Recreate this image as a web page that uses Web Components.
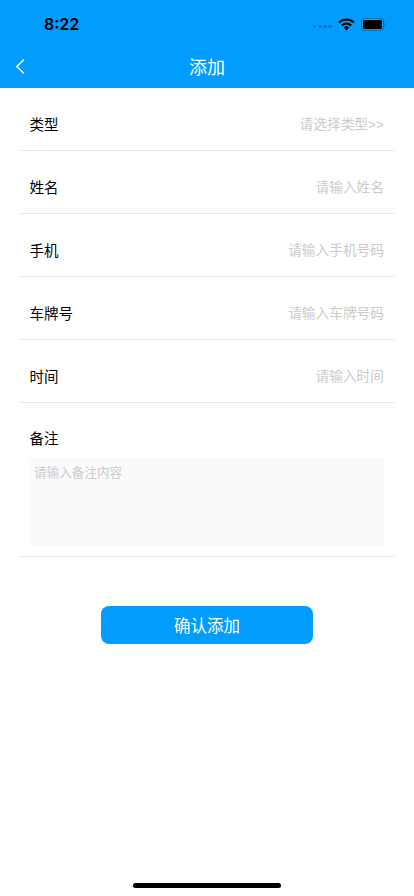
<!DOCTYPE html>
<html lang="zh">
<head>
<meta charset="utf-8">
<title>添加</title>
<style>
  html, body { margin: 0; height: 100%; background: #fff; }
  body { font-family: "Noto Sans CJK SC", "Liberation Sans", sans-serif; }
</style>
</head>
<body>
<add-page>
  <nav-header>添加</nav-header>
  <form-row label="类型" hint="请选择类型&gt;&gt;"></form-row>
  <form-row label="姓名" hint="请输入姓名"></form-row>
  <form-row label="手机" hint="请输入手机号码"></form-row>
  <form-row label="车牌号" hint="请输入车牌号码"></form-row>
  <form-row label="时间" hint="请输入时间"></form-row>
  <note-row label="备注" hint="请输入备注内容"></note-row>
  <submit-button>确认添加</submit-button>
  <home-bar></home-bar>
</add-page>

<script>
  customElements.define('add-page', class extends HTMLElement {
    constructor() {
      super();
      this.attachShadow({mode: 'open'}).innerHTML = `
        <style>
          :host { display: flex; flex-direction: column; height: 896px; overflow: hidden; background: #fff; }
        </style>
        <slot></slot>`;
    }
  });

  customElements.define('nav-header', class extends HTMLElement {
    constructor() {
      super();
      this.attachShadow({mode: 'open'}).innerHTML = `
        <style>
          :host { display: block; height: 88px; background: #009dff; flex: none; }
          .status { height: 44px; display: flex; align-items: center; padding: 4px 28px 0 44px; box-sizing: border-box; }
          .time { font: 600 16px/20px Inter, "Liberation Sans", sans-serif; color: #000; flex: 1; }
          .icons { display: flex; align-items: center; }
          .dots { display: flex; gap: 1.4px; margin-right: 6px; margin-top: 5px; }
          .dots i { width: 3.8px; height: 3.8px; border-radius: 50%; background: #0a78bd; }
          .wifi { margin-right: 5px; }
          .bar { height: 44px; display: flex; align-items: center; justify-content: center; position: relative; }
          .back { position: absolute; left: 14px; top: 13px; }
          .title { font-size: 18px; line-height: 24px; color: #fff; }
        </style>
        <div class="status">
          <span class="time">8:22</span>
          <span class="icons">
            <span class="dots"><i></i><i></i><i></i><i></i></span>
            <svg class="wifi" width="17" height="13" viewBox="0 0 17 13">
              <path d="M1 4.6 A10.8 10.8 0 0 1 16 4.6" fill="none" stroke="#000" stroke-width="2"/>
              <path d="M3.8 7.4 A6.9 6.9 0 0 1 13.2 7.4" fill="none" stroke="#000" stroke-width="2"/>
              <path d="M5.8 9.4 A3.9 3.9 0 0 1 11.2 9.4 L8.5 12.4 Z" fill="#000"/>
            </svg>
            <svg width="26" height="13" viewBox="0 0 26 13">
              <rect x="1.5" y="0.5" width="22" height="12" rx="3.2" fill="none" stroke="#0576bd" stroke-width="1.2"/>
              <rect x="3" y="2" width="19" height="9" rx="1.8" fill="#000"/>
              <path d="M24.6 4.8 a1.8 1.8 0 0 1 0 3.4 Z" fill="#0576bd"/>
            </svg>
          </span>
        </div>
        <div class="bar">
          <svg class="back" width="12" height="19" viewBox="0 0 12 19">
            <path d="M10 2.5 L2.8 9.5 L10 16.5" fill="none" stroke="#fff" stroke-width="1.5"/>
          </svg>
          <span class="title"><slot></slot></span>
        </div>`;
    }
  });

  customElements.define('form-row', class extends HTMLElement {
    constructor() {
      super();
      this.attachShadow({mode: 'open'}).innerHTML = `
        <style>
          :host { display: flex; height: 62px; margin: 0 20px; padding: 0 10px 0 9.5px; border-bottom: 1px solid #e8e8e8; align-items: center; justify-content: space-between; flex: none; }
          .label { font-size: 14.5px; line-height: 20px; color: #000; margin-top: 10px; }
          .hint { font-family: "Liberation Sans", "Noto Sans CJK SC", sans-serif; font-size: 13.7px; line-height: 20px; color: #cbcbcb; margin-top: 12px; }
        </style>
        <span class="label"></span>
        <span class="hint"></span>`;
      this.shadowRoot.querySelector('.label').textContent = this.getAttribute('label');
      this.shadowRoot.querySelector('.hint').textContent = this.getAttribute('hint');
    }
  });

  customElements.define('note-row', class extends HTMLElement {
    constructor() {
      super();
      this.attachShadow({mode: 'open'}).innerHTML = `
        <style>
          :host { display: block; margin: 0 20px; padding: 25px 10px 0 9px; height: 128px; border-bottom: 1px solid #e8e8e8; flex: none; }
          .label { font-size: 14.5px; line-height: 20px; color: #000; display: block; margin-left: .5px; }
          .box { height: 88px; margin-top: 10px; background: #fafafa; padding: 5px; box-sizing: border-box; font-size: 12.6px; line-height: 18px; color: #cbcbcb; }
        </style>
        <span class="label"></span>
        <div class="box"></div>`;
      this.shadowRoot.querySelector('.label').textContent = this.getAttribute('label');
      this.shadowRoot.querySelector('.box').textContent = this.getAttribute('hint');
    }
  });

  customElements.define('submit-button', class extends HTMLElement {
    constructor() {
      super();
      this.attachShadow({mode: 'open'}).innerHTML = `
        <style>
          :host { display: flex; width: 212px; height: 38px; margin: 49px auto 0; background: #009dff; border-radius: 8px; color: #fff; font-size: 16.5px; align-items: center; justify-content: center; flex: none; }
        </style>
        <slot></slot>`;
    }
  });

  customElements.define('home-bar', class extends HTMLElement {
    constructor() {
      super();
      this.attachShadow({mode: 'open'}).innerHTML = `
        <style>
          :host { display: block; width: 148px; height: 5px; margin: auto auto 8px; background: #000; border-radius: 3px; flex: none; }
        </style>`;
    }
  });
</script>
</body>
</html>
